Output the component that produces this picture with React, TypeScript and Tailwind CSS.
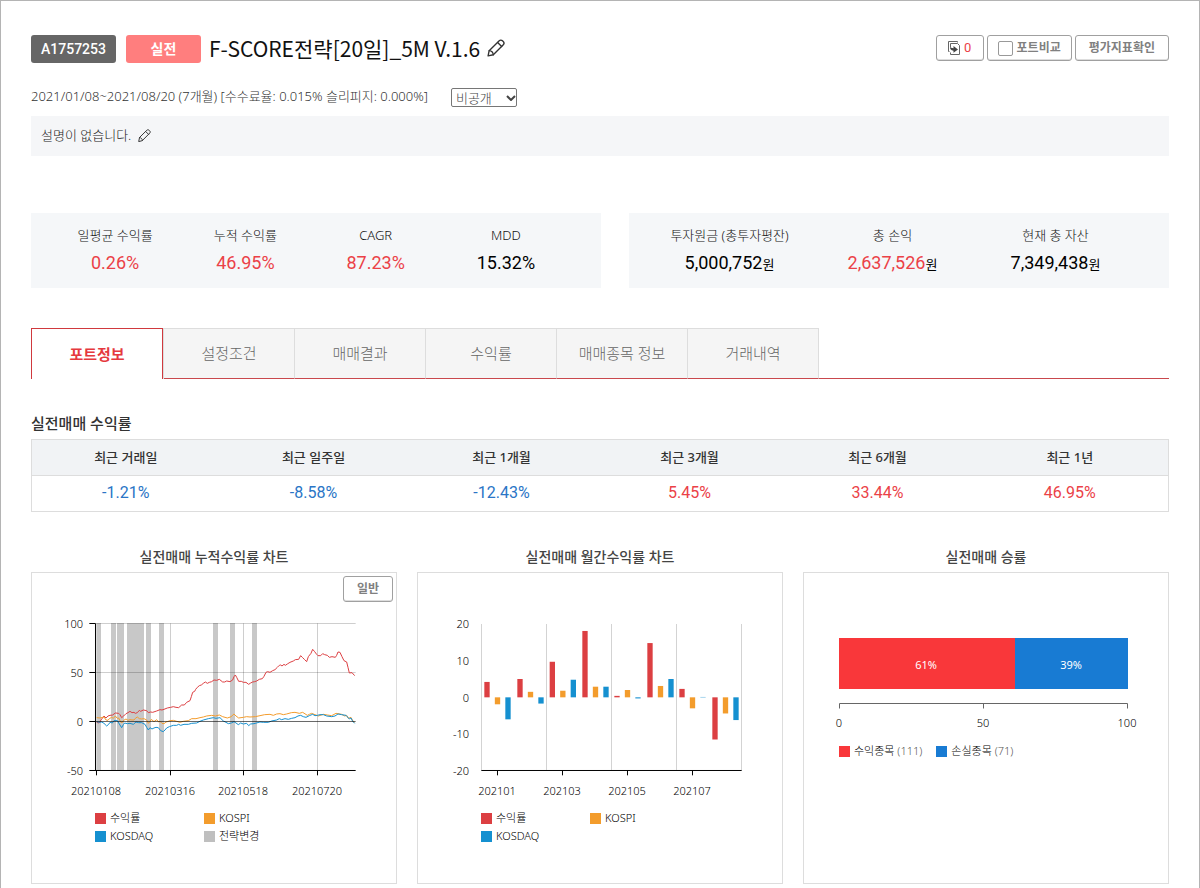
import React from "react";

const RED = "#dc3f42";
const ORANGE = "#f39c2c";
const BLUE = "#1590d0";

const stats = [
  { label: "일평균 수익률", value: "0.26%", tone: "text-[#eb4147]" },
  { label: "누적 수익률", value: "46.95%", tone: "text-[#eb4147]" },
  { label: "CAGR", value: "87.23%", tone: "text-[#eb4147]" },
  { label: "MDD", value: "15.32%", tone: "text-black" },
];

const assets = [
  { label: "투자원금 (총투자평잔)", value: "5,000,752", tone: "text-black" },
  { label: "총 손익", value: "2,637,526", tone: "text-[#eb4147]" },
  { label: "현재 총 자산", value: "7,349,438", tone: "text-black" },
];

const tabs = ["설정조건", "매매결과", "수익률", "매매종목 정보", "거래내역"];

const periods = [
  { label: "최근 거래일", value: "-1.21%" },
  { label: "최근 일주일", value: "-8.58%" },
  { label: "최근 1개월", value: "-12.43%" },
  { label: "최근 3개월", value: "5.45%" },
  { label: "최근 6개월", value: "33.44%" },
  { label: "최근 1년", value: "46.95%" },
];

/* Plot coordinates are in thirds of a pixel. */
const PROFIT =
  "200,457 207,459 213,450 222,438 228,444 234,438 240,436 248,435 256,429 266,430 270,434 275,443 281,438 288,431 294,428 300,424 306,428 312,427 316,430 322,428 328,421 332,424 340,420 350,422 355,428 362,426 368,427 380,423 390,419 396,420 402,418 412,414 422,412 430,410 438,412 446,413 455,405 463,405 470,397 480,392 484,380 488,367 494,364 497,358 502,352 508,347 514,345 520,340 526,336 532,340 538,337 545,335 552,330 560,331 568,328 578,336 584,336 590,333 600,335 608,330 612,320 616,315 620,322 626,334 634,334 640,337 648,337 656,343 662,339 668,336 674,335 680,333 688,328 697,326 702,319 708,307 713,305 720,307 728,302 735,299 742,292 748,286 752,285 756,288 762,283 766,286 772,282 780,277 790,273 796,269 806,268 812,257 818,263 824,269 830,275 835,260 843,250 848,238 854,245 860,253 864,257 872,257 878,251 884,254 892,256 898,262 906,260 916,262 920,256 924,246 930,247 936,260 942,272 950,276 954,292 958,309 966,308 974,317";
const KOSPI =
  "200,443 210,444 222,441 228,450 234,451 238,446 245,442 250,445 256,438 262,445 266,444 270,452 275,459 281,451 288,447 294,451 300,449 306,450 312,450 316,445 322,441 328,446 335,447 342,446 350,450 355,460 360,455 364,448 372,455 380,449 386,456 390,454 396,460 402,461 408,456 412,455 420,452 430,451 440,454 450,457 460,454 475,452 485,446 498,446 510,443 520,441 530,438 545,436 556,438 568,435 578,440 592,444 604,440 608,435 612,432 618,438 626,444 640,442 650,440 660,441 676,440 690,437 704,434 720,433 730,436 740,432 750,431 760,434 770,432 784,428 795,427 808,430 818,427 832,436 838,433 845,430 855,434 865,438 880,433 892,435 905,437 918,430 935,433 944,438 950,436 955,445 963,442 968,452 974,457";
const KOSDAQ =
  "200,455 208,457 215,456 222,460 230,468 236,463 240,457 247,459 252,452 262,452 268,462 275,473 280,464 284,459 292,461 300,460 310,463 318,456 326,458 335,458 345,463 350,472 355,480 360,473 366,477 372,474 378,472 385,473 392,482 400,485 405,480 410,474 418,470 430,466 440,466 446,463 452,466 462,463 475,463 485,460 500,459 510,454 520,450 535,446 550,443 558,445 570,443 580,453 588,457 595,461 604,459 612,455 618,459 625,464 632,459 640,462 650,460 656,467 662,462 672,461 690,456 700,457 715,457 725,453 740,450 748,446 755,449 765,446 775,448 785,445 795,443 804,438 812,436 820,440 828,442 838,437 848,433 855,437 862,436 870,434 880,434 890,438 905,440 915,438 924,432 935,434 948,436 958,447 963,444 968,454 974,460";

const bands = [
  [199, 14], [243, 15], [261, 21], [291, 51], [348, 15], [387, 15], [549, 15], [600, 15], [666, 15],
];

const months = [
  [208, 4.2, -1.9, -6], [307, 5, 1.5, -1.7], [404, 9.7, 1.8, 4.8], [502, 18.1, 2.9, 2.9],
  [598, 0.4, 2, -0.3], [697, 14.8, 3.1, 5], [793, 2.3, -3, 0.1], [892, -11.5, -4.4, -6.2],
];

function Pencil({ className }: { className: string }) {
  return (
    <svg viewBox="0 0 20 20" className={className} fill="none" stroke="#333" strokeWidth="1.5" strokeLinejoin="round" strokeLinecap="round" aria-hidden="true">
      <path d="M1.200 18.800 2.400 13 13.600 1.900c1-1 2.600-.9 3.600.1l.8.8c1 1 1.100 2.500.1 3.500L7 17.500Z" />
      <path d="m11.800 3.800 4.500 4.500M2.400 13c2.200.2 4.300 2.200 4.600 4.500" />
    </svg>
  );
}

function CopyIcon() {
  return (
    <svg viewBox="0 0 13 14" className="h-[14px] w-[13px]" fill="none" stroke="#666" aria-hidden="true">
      <path d="M1.500 10.500h-1V.5h9v1" />
      <path d="M2.500 6V2.500h7l2 2v9h-9v-2" />
      <path d="M2 5.500c.5 1.200 1.500 1.700 3.500 1.700V5l4.500 3.500-4.500 3.300V9.700C3 9.600 1.800 8 2 5.500Z" fill="#444" stroke="none" />
    </svg>
  );
}

function Legend({ items, className }: { items: { name: string; count?: number; swatch: string }[]; className: string }) {
  return (
    <ul className={className}>
      {items.map((item) => (
        <li key={item.name} className="flex items-center gap-1">
          <span className={`size-[11px] ${item.swatch}`} />
          <span>
            {item.name}
            {item.count !== undefined && <span className="text-[#555]"> ({item.count})</span>}
          </span>
        </li>
      ))}
    </ul>
  );
}

function Card({ title, children }: { title: string; children: React.ReactNode }) {
  return (
    <section>
      <h3 className="text-center text-sm leading-5 font-medium text-[#444]">{title}</h3>
      <div className="relative mt-[5px] h-[312px] border border-[#ddd] text-[11px] leading-[18px] font-light text-black">
        {children}
      </div>
    </section>
  );
}

function CumulativeChart() {
  return (
    <svg viewBox="0 0 364 236" className="block w-full" role="img" aria-label="누적수익률">
      <g transform="translate(-2 -3) scale(0.33333)" fill="none">
        {bands.map(([x, w]) => (
          <rect key={x} x={x} y="159" width={w} height="442" fill="#c8c8c8" />
        ))}
        <path d="M197 160.500H977M197 307.500H977M421.500 160V601M640.500 160V601M862.500 160V601" stroke="#000" strokeOpacity=".2" strokeWidth="3" />
        <polyline points={PROFIT} stroke={RED} strokeWidth="3" />
        <polyline points={KOSPI} stroke={ORANGE} strokeWidth="3" />
        <polyline points={KOSDAQ} stroke={BLUE} strokeWidth="3" />
        <path d="M197 454.500H977" stroke="#000" strokeOpacity=".6" strokeWidth="3" />
        <path d="M178 160.500H196.500V601.500M178 307.500H197M178 454.500H197M178 601.500H977M199.500 601V616M421.500 601V616M640.500 601V616M862.500 601V616" stroke="#000" strokeWidth="3" />
      </g>
      <g textAnchor="end">
        <text x="51" y="55">100</text>
        <text x="51" y="104">50</text>
        <text x="51" y="153">0</text>
        <text x="51" y="202">-50</text>
      </g>
      <g textAnchor="middle">
        <text x="64" y="222">20210108</text>
        <text x="138" y="222">20210316</text>
        <text x="211" y="222">20210518</text>
        <text x="285" y="222">20210720</text>
      </g>
    </svg>
  );
}

function MonthlyChart() {
  return (
    <svg viewBox="0 0 364 236" className="block w-full" role="img" aria-label="월간수익률">
      <g transform="translate(-3 -3) scale(0.33333)" fill="none">
        <path d="M199.500 162V601M394.500 162V601M589.500 162V601M784.500 162V601M979.500 162V601" stroke="#d3d3d3" strokeWidth="3" />
        {months.map(([x, ...values]) =>
          values.map((value, i) => (
            <rect
              key={`${x}-${i}`}
              x={x + i * 31.5}
              y={value > 0 ? 382 - value * 11 : 382}
              width="16"
              height={Math.abs(value) * 11}
              fill={[RED, ORANGE, BLUE][i]}
            />
          )),
        )}
        <path d="M199 601.500H980M247.500 601V616M442.500 601V616M637.500 601V616M832.500 601V616" stroke="#000" strokeWidth="3" />
      </g>
      <g textAnchor="end">
        <text x="51" y="55">20</text>
        <text x="51" y="92">10</text>
        <text x="51" y="129">0</text>
        <text x="51" y="165">-10</text>
        <text x="51" y="202">-20</text>
      </g>
      <g textAnchor="middle">
        <text x="79" y="222">202101</text>
        <text x="144" y="222">202103</text>
        <text x="209" y="222">202105</text>
        <text x="274" y="222">202107</text>
      </g>
    </svg>
  );
}

function WinRateChart() {
  return (
    <svg viewBox="0 0 364 169" className="block w-full" role="img" aria-label="승률">
      <rect x="35" y="65" width="176" height="51" fill="#f9373a" />
      <rect x="211" y="65" width="113" height="51" fill="#187bd3" />
      <path d="M35.500 135.500V130.500H323.500V135.500M179.500 130.500V135.500" fill="none" stroke="#666" />
      <g textAnchor="middle">
        <text x="122" y="96" fill="#fff" className="font-normal">61%</text>
        <text x="267" y="96" fill="#fff" className="font-normal">39%</text>
        <text x="35" y="154">0</text>
        <text x="179" y="154">50</text>
        <text x="323" y="154">100</text>
      </g>
    </svg>
  );
}

const pill =
  "rounded-[3px] border border-[#a0a0a0] bg-white text-xs font-bold text-[#808080] shadow-[inset_0_-1px_0_#ddd]";

export default function App() {
  return (
    <main className="min-h-screen border border-b-0 border-[#b4b4b4] bg-white px-[30px] pt-[34px] pb-1 font-['Noto_Sans','Noto_Sans_CJK_KR',sans-serif] text-[#333]">
      <header className="flex items-start justify-between">
        <div className="flex h-7 items-center">
          <span className="flex h-7 items-center rounded-[3px] bg-[#666] px-[10px] font-['Roboto'] text-sm font-medium text-white">A1757253</span>
          <span className="ml-[10px] flex h-7 w-[75px] items-center justify-center rounded-[3px] bg-[#ff7e7e] text-sm font-bold text-white">실전</span>
          <h1 className="ml-2 pb-[3px] font-['Noto_Sans_CJK_KR'] text-[21px] leading-7 text-[#111]">F-SCORE전략[20일]_5M V.1.6</h1>
          <button type="button" aria-label="이름 수정" className="ml-[7px] pb-0.5"><Pencil className="size-[18px]" /></button>
        </div>
        <div className="flex gap-[3px]">
          <button type="button" className={`flex h-[26px] w-12 items-center justify-center gap-[3px] ${pill}`}>
            <CopyIcon />
            <span className="font-['Roboto'] text-[13px] font-normal text-[#eb4147]">0</span>
          </button>
          <label className={`flex h-[26px] items-center gap-1 px-[10px] ${pill}`}>
            <input type="checkbox" className="size-[15px] appearance-none rounded-[2px] border border-[#999] bg-white" />
            포트비교
          </label>
          <button type="button" className={`h-[26px] px-[13px] ${pill}`}>평가지표확인</button>
        </div>
      </header>

      <div className="mt-6 flex h-5 items-center gap-[23px] text-[13px] font-light text-[#333]">
        <p>2021/01/08~2021/08/20 (7개월) [수수료율: 0.015% 슬리피지: 0.000%]</p>
        <div className="relative h-[19px] w-[66px]">
          <select aria-label="공개 설정" className="block h-full w-full appearance-none rounded-[2px] border border-[#767676] bg-white pl-1 font-['Noto_Sans_CJK_KR'] text-[13px] leading-[17px] text-[#444]">
            <option>비공개</option>
            <option>공개</option>
          </select>
          <svg viewBox="0 0 10 6" className="pointer-events-none absolute top-[7px] right-px h-[6px] w-[10px]" fill="none" stroke="#444" strokeWidth="2" aria-hidden="true">
            <path d="m1 1 4 4 4-4" />
          </svg>
        </div>
      </div>

      <div className="mt-[9px] flex h-10 items-center gap-[7px] bg-[#f5f6f8] px-[10px] text-[13px] font-light text-[#222]">
        <p>설명이 없습니다.</p>
        <button type="button" aria-label="설명 수정" className="pb-0.5"><Pencil className="size-[13px]" /></button>
      </div>

      <div className="mt-[57px] grid grid-cols-[570fr_540fr] gap-7 text-center text-[#111]">
        <dl className="grid h-[75px] grid-cols-4 bg-[#f5f7f9] pt-3 pr-[30px] pl-[19px]">
          {stats.map((s) => (
            <div key={s.label}>
              <dt className="text-[13px] leading-5 font-light">{s.label}</dt>
              <dd className={`mt-2 font-['Roboto'] text-lg leading-5 ${s.tone}`}>{s.value}</dd>
            </div>
          ))}
        </dl>
        <dl className="grid h-[75px] grid-cols-3 bg-[#f5f7f9] pt-3 pr-[32px] pl-[19px]">
          {assets.map((s) => (
            <div key={s.label}>
              <dt className="text-[13px] leading-5 font-light">{s.label}</dt>
              <dd className={`mt-2 font-['Roboto'] text-lg leading-5 ${s.tone}`}>
                {s.value}
                <span className="font-['Noto_Sans_CJK_KR'] text-[13px] text-black">원</span>
              </dd>
            </div>
          ))}
        </dl>
      </div>

      <nav className="mt-10 flex h-[51px] text-[15px]">
        <button type="button" className="w-[132px] border border-b-0 border-[#d0393e] bg-white font-bold text-[#e5393e]">포트정보</button>
        <div className="flex border-l border-[#ddd]">
          {tabs.map((t) => (
            <button key={t} type="button" className="w-[131px] border-t border-r border-b border-t-[#ddd] border-r-[#ddd] border-b-[#c9484d] bg-[#f5f5f5] font-light text-[#666]">
              {t}
            </button>
          ))}
        </div>
        <div className="flex-1 border-b border-[#c9484d]" />
      </nav>

      <h2 className="mt-[33px] text-[15px] leading-[22px] font-medium">실전매매 수익률</h2>
      <table className="mt-[5px] w-full table-fixed border-collapse border border-[#ddd] text-center">
        <colgroup>
          {periods.map((p, i) => (
            <col key={p.label} className={i < 5 ? "w-[188px]" : ""} />
          ))}
        </colgroup>
        <thead>
          <tr className="h-9 border-b border-[#ddd] bg-[#f1f3f5] text-[13px]">
            {periods.map((p) => (
              <th key={p.label} scope="col" className="font-medium">{p.label}</th>
            ))}
          </tr>
        </thead>
        <tbody>
          <tr className="h-9 font-['Roboto'] text-base leading-5">
            {periods.map((p) => (
              <td key={p.label} className={`pb-0.5 ${p.value.startsWith("-") ? "text-[#2a75c6]" : "text-[#eb4147]"}`}>{p.value}</td>
            ))}
          </tr>
        </tbody>
      </table>

      <div className="mt-[35px] grid grid-cols-3 gap-5">
        <Card title="실전매매 누적수익률 차트">
          <CumulativeChart />
          <button type="button" className={`absolute top-[3px] right-[3px] h-[26px] w-[50px] ${pill}`}>일반</button>
          <Legend
            className="grid grid-cols-[109px_1fr] pl-[63px]"
            items={[
              { name: "수익률", swatch: "bg-[#dc3f42]" },
              { name: "KOSPI", swatch: "bg-[#f39c2c]" },
              { name: "KOSDAQ", swatch: "bg-[#1590d0]" },
              { name: "전략변경", swatch: "bg-[#bfbfbf]" },
            ]}
          />
        </Card>
        <Card title="실전매매 월간수익률 차트">
          <MonthlyChart />
          <Legend
            className="grid grid-cols-[109px_1fr] pl-[63px]"
            items={[
              { name: "수익률", swatch: "bg-[#dc3f42]" },
              { name: "KOSPI", swatch: "bg-[#f39c2c]" },
              { name: "KOSDAQ", swatch: "bg-[#1590d0]" },
            ]}
          />
        </Card>
        <Card title="실전매매 승률">
          <WinRateChart />
          <Legend
            className="flex gap-[14px] pl-[35px]"
            items={[
              { name: "수익종목", count: 111, swatch: "bg-[#f9373a]" },
              { name: "손실종목", count: 71, swatch: "bg-[#187bd3]" },
            ]}
          />
        </Card>
      </div>
    </main>
  );
}
